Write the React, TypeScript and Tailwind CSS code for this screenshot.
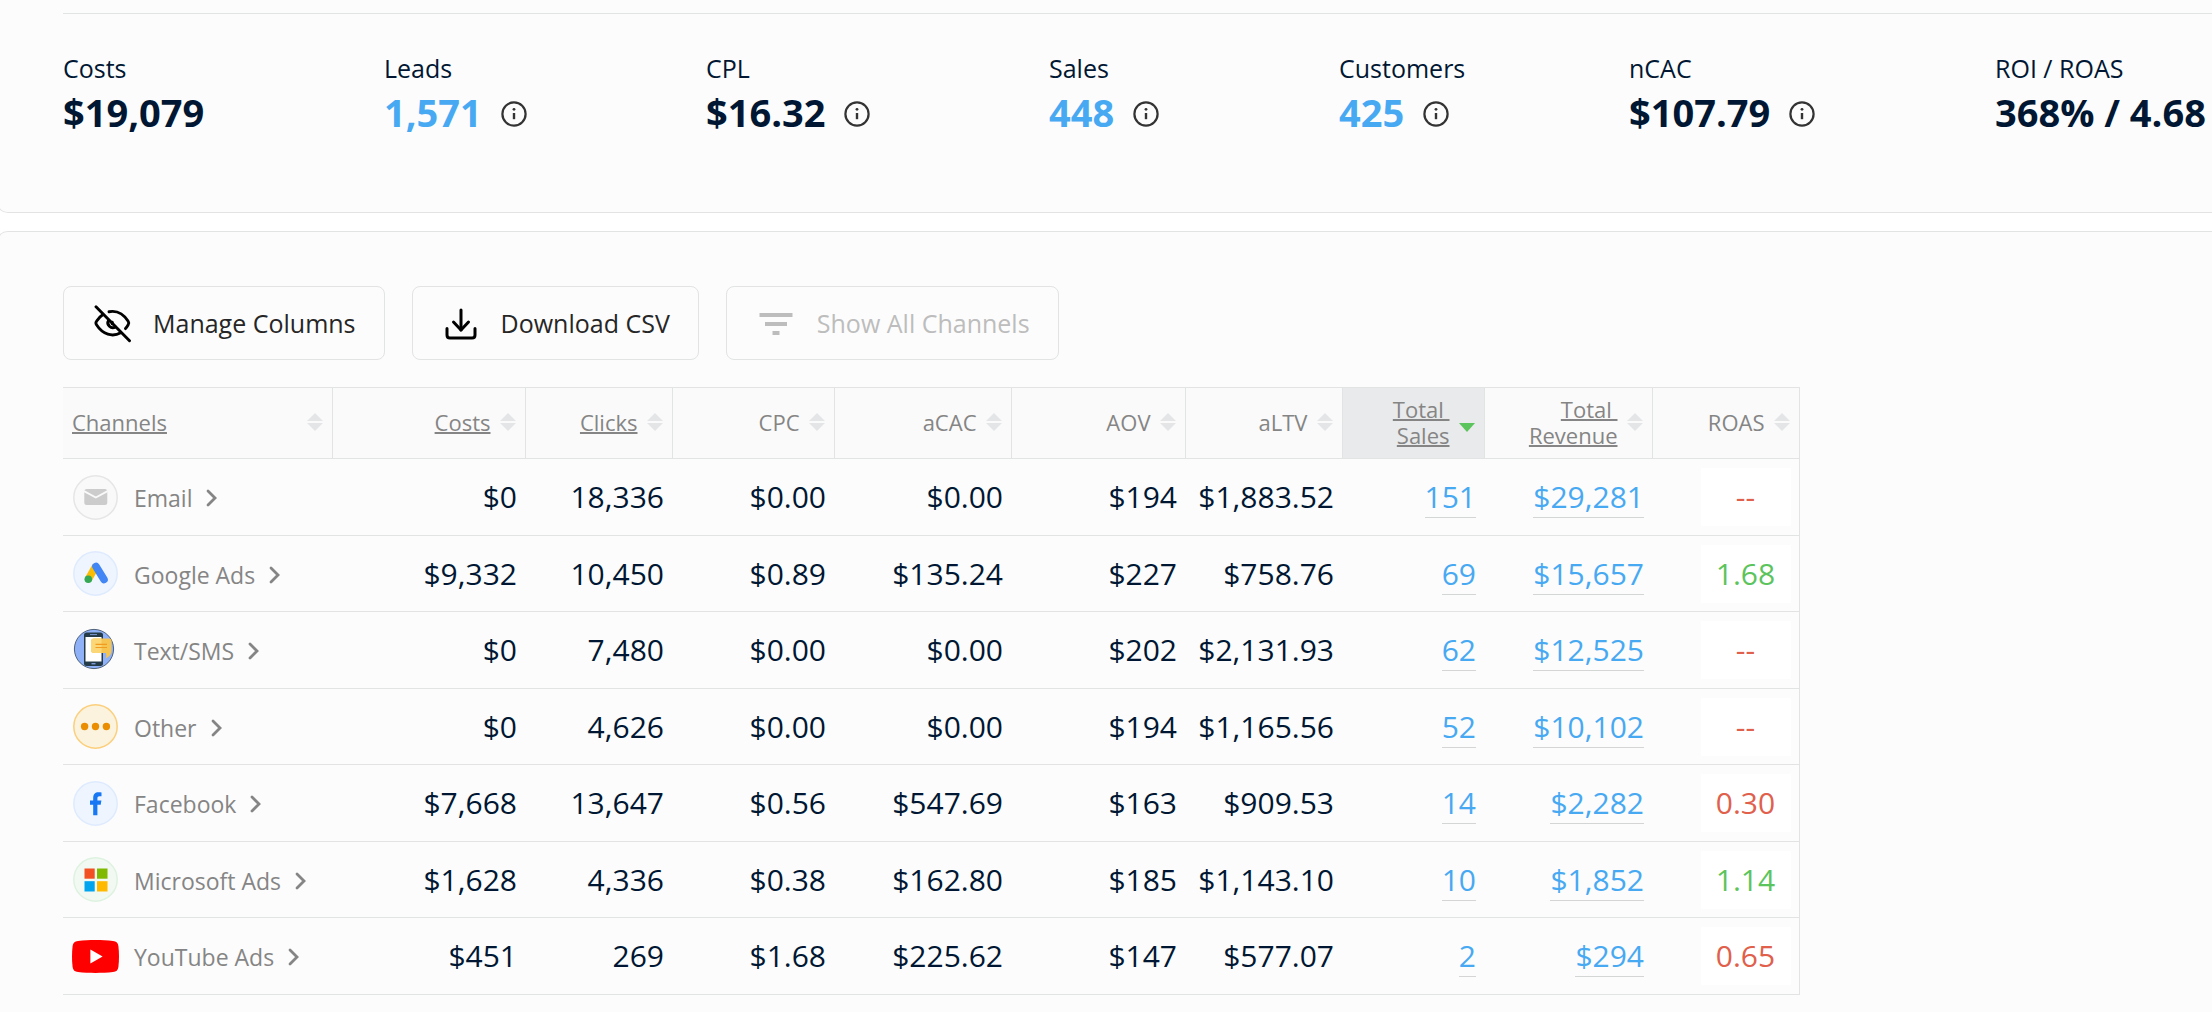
import React from "react";

type Kpi = {
  label: string;
  value: string;
  width: string;
  info?: boolean;
  link?: boolean;
};

type Channel = {
  name: string;
  icon: React.ReactNode;
  values: string[];
  sales: string;
  revenue: string;
  roas: string;
};

type Column = {
  label: string;
  width: string;
  underline?: boolean;
  sorted?: boolean;
};

const kpis: Kpi[] = [
  { label: "Costs", value: "$19,079", width: "w-[321px]" },
  { label: "Leads", value: "1,571", width: "w-[322px]", info: true, link: true },
  { label: "CPL", value: "$16.32", width: "w-[343px]", info: true },
  { label: "Sales", value: "448", width: "w-[290px]", info: true, link: true },
  { label: "Customers", value: "425", width: "w-[290px]", info: true, link: true },
  { label: "nCAC", value: "$107.79", width: "w-[366px]", info: true },
  { label: "ROI / ROAS", value: "368% / 4.68", width: "w-[220px]" },
];

const columns: Column[] = [
  { label: "Channels", width: "w-[269px]", underline: true },
  { label: "Costs", width: "w-[193px]", underline: true },
  { label: "Clicks", width: "w-[147px]", underline: true },
  { label: "CPC", width: "w-[162px]" },
  { label: "aCAC", width: "w-[177px]" },
  { label: "AOV", width: "w-[174px]" },
  { label: "aLTV", width: "w-[157px]" },
  { label: "Total\u00a0\nSales", width: "w-[142px]", underline: true, sorted: true },
  { label: "Total\u00a0\nRevenue", width: "w-[168px]", underline: true },
  { label: "ROAS", width: "w-[147px]" },
];

function EmailIcon() {
  return (
    <svg width="45" height="45" viewBox="0 0 45 45">
      <circle cx="22.5" cy="22.5" r="21.7" fill="#f9f9f9" stroke="#e6e6e6" strokeWidth="1.5" />
      <rect x="11.3" y="14" width="23" height="16" rx="2.5" fill="#cccccc" />
      <path d="M11 16.2l11.8 6.3 11.8-6.3" fill="none" stroke="#f9f9f9" strokeWidth="1.9" />
    </svg>
  );
}

function GoogleAdsIcon() {
  return (
    <svg width="45" height="45" viewBox="0 0 45 45">
      <circle cx="22.5" cy="22.5" r="21.7" fill="#eef5ff" stroke="#deebfe" strokeWidth="1.5" />
      <path d="M15.3 28.3L22.8 15.2" stroke="#fbbc04" strokeWidth="7.4" />
      <path d="M23 15.4L31 28.4" stroke="#4285f4" strokeWidth="7.6" strokeLinecap="round" />
      <circle cx="15.3" cy="28.3" r="3.8" fill="#34a853" />
    </svg>
  );
}

function SmsIcon() {
  return (
    <svg width="45" height="45" viewBox="0 0 45 45">
      <circle cx="21" cy="21" r="19.6" fill="#8fb1f8" stroke="#41536b" strokeWidth="0.9" />
      <rect x="11" y="4.5" width="19" height="33.5" rx="2.5" fill="#263b48" />
      <rect x="12.5" y="9" width="16" height="24.5" fill="#ffffff" />
      <path d="M17 6.6h7" stroke="#7d9bd8" strokeWidth="1" />
      <path d="M18.5 35.7h4" stroke="#7d9bd8" strokeWidth="1.4" />
      <path d="M21 10.5h15q2.5 0 2.5 2.5v10q0 5-6 7.5 1.5-2.5.5-5.500H21q-3 0-3-3v-8.500q0-3 3-3z" fill="#f6c451" />
      <path d="M21 10.5h7.5V25H21q-3 0-3-3v-8.500q0-3 3-3z" fill="#fbd777" />
      <path d="M22.5 16.4h11.5M22.5 19.5h11.5" stroke="#f29c1f" strokeWidth="1.2" />
    </svg>
  );
}

function OtherIcon() {
  return (
    <svg width="45" height="45" viewBox="0 0 45 45">
      <circle cx="22.5" cy="22.5" r="21.7" fill="#fbf3dd" stroke="#fbcf7c" strokeWidth="1.5" />
      <circle cx="11.6" cy="22.5" r="3.7" fill="#eb8d00" />
      <circle cx="22.5" cy="22.5" r="3.7" fill="#eb8d00" />
      <circle cx="33.4" cy="22.5" r="3.7" fill="#eb8d00" />
    </svg>
  );
}

function FacebookIcon() {
  return (
    <svg width="45" height="45" viewBox="0 0 45 45">
      <circle cx="22.5" cy="22.5" r="21.7" fill="#eef5ff" stroke="#deebfe" strokeWidth="1.5" />
      <path
        d="M20.2 34.2V23.8h-3.2v-4.2h3.2v-2.6c0-3.7 1.9-5.7 5.4-5.7 1.1 0 2.2.1 2.9.3v3.7h-1.9c-1.6 0-2.2.8-2.2 2.1v2.2h4l-.7 4.2h-3.3v10.4z"
        fill="#1877f2"
      />
    </svg>
  );
}

function MicrosoftIcon() {
  return (
    <svg width="45" height="45" viewBox="0 0 45 45">
      <circle cx="22.5" cy="22.5" r="21.7" fill="#f2f9f2" stroke="#def2e0" strokeWidth="1.5" />
      <rect x="11.5" y="11.5" width="10.2" height="10.2" fill="#f25022" />
      <rect x="24" y="11.5" width="10.5" height="10.2" fill="#7fba00" />
      <rect x="11.5" y="24.2" width="10.2" height="10.3" fill="#00a4ef" />
      <rect x="24" y="24.2" width="10.5" height="10.3" fill="#ffb900" />
    </svg>
  );
}

function YoutubeIcon() {
  return (
    <svg width="47" height="33" viewBox="0 0 47 33" className="-mx-px">
      <path
        d="M6 .9C17 -.3 30 -.3 41 .9c3.5.4 5 2 5.4 5 .8 7 .8 14.2 0 21.2-.4 3-1.9 4.6-5.4 5-11 1.2-24 1.2-35 0-3.5-.4-5-2-5.4-5-.8-7-.8-14.2 0-21.2C1 2.9 2.5 1.3 6 .9z"
        fill="#ff0000"
      />
      <path d="M18.4 9.5v14l12.2-7z" fill="#ffffff" />
    </svg>
  );
}

const channels: Channel[] = [
  { name: "Email", icon: <EmailIcon />, values: ["$0", "18,336", "$0.00", "$0.00", "$194", "$1,883.52"], sales: "151", revenue: "$29,281", roas: "--" },
  { name: "Google Ads", icon: <GoogleAdsIcon />, values: ["$9,332", "10,450", "$0.89", "$135.24", "$227", "$758.76"], sales: "69", revenue: "$15,657", roas: "1.68" },
  { name: "Text/SMS", icon: <SmsIcon />, values: ["$0", "7,480", "$0.00", "$0.00", "$202", "$2,131.93"], sales: "62", revenue: "$12,525", roas: "--" },
  { name: "Other", icon: <OtherIcon />, values: ["$0", "4,626", "$0.00", "$0.00", "$194", "$1,165.56"], sales: "52", revenue: "$10,102", roas: "--" },
  { name: "Facebook", icon: <FacebookIcon />, values: ["$7,668", "13,647", "$0.56", "$547.69", "$163", "$909.53"], sales: "14", revenue: "$2,282", roas: "0.30" },
  { name: "Microsoft Ads", icon: <MicrosoftIcon />, values: ["$1,628", "4,336", "$0.38", "$162.80", "$185", "$1,143.10"], sales: "10", revenue: "$1,852", roas: "1.14" },
  { name: "YouTube Ads", icon: <YoutubeIcon />, values: ["$451", "269", "$1.68", "$225.62", "$147", "$577.07"], sales: "2", revenue: "$294", roas: "0.65" },
];

function InfoIcon() {
  return (
    <svg width="26" height="26" viewBox="0 0 26 26" fill="none">
      <circle cx="13" cy="13" r="11.6" stroke="#333333" strokeWidth="2.2" />
      <path d="M13 12v6.2" stroke="#333333" strokeWidth="2.4" />
      <circle cx="13" cy="8.3" r="1.4" fill="#333333" />
    </svg>
  );
}

function EyeOffIcon() {
  return (
    <svg width="38" height="38" viewBox="0 0 38 38" fill="none" stroke="#000000" strokeWidth="2.9" strokeLinecap="round">
      <path d="M2 1.8l33.5 34" />
      <path d="M15 6.7c7.5-1.4 14.3 1.8 19.2 9.6.8 1.2.8 2.3 0 3.5-.8 1.4-1.6 2.6-2.7 3.8" />
      <path d="M9 9.5c-2.5 1.6-4.7 3.9-6.5 6.8-.8 1.2-.8 2.3 0 3.5 6.3 9.9 15.9 12.5 24.3 8" />
      <path d="M14.6 15.2c-2.6 4.6 2.4 9.4 6.9 6.7" />
      <path d="M18.2 17.3v1.6" />
    </svg>
  );
}

function DownloadIcon() {
  return (
    <svg width="32" height="32" viewBox="0 0 32 32" fill="none" stroke="#000000" strokeWidth="3" strokeLinecap="round" strokeLinejoin="round">
      <path d="M16 2v20" />
      <path d="M8.5 14l7.5 8 7.5-8" />
      <path d="M2 20.5v6.5c0 2 1 3 3 3h22c2 0 3-1 3-3v-6.5" />
    </svg>
  );
}

function FilterIcon() {
  return (
    <svg width="34" height="24" viewBox="0 0 34 24" fill="#bdbdbd">
      <rect x="0.5" y="1" width="33" height="4" />
      <rect x="6" y="10" width="22" height="4" />
      <rect x="13.5" y="19" width="7" height="4" />
    </svg>
  );
}

function SortIcon({ sorted }: { sorted?: boolean }) {
  if (sorted) {
    return (
      <svg width="16" height="20" viewBox="0 0 16 20" className="shrink-0">
        <path d="M0 11h16l-8 9z" fill="#5cc45c" />
      </svg>
    );
  }
  return (
    <svg width="16" height="18" viewBox="0 0 16 18" fill="#e4e5e7" className="shrink-0">
      <path d="M8 0l8 8H0z" />
      <path d="M0 10h16l-8 8z" />
    </svg>
  );
}

function ChevronIcon() {
  return (
    <svg width="12" height="18" viewBox="0 0 12 18" fill="none" stroke="#858585" strokeWidth="2.8" strokeLinecap="round">
      <path d="M2 2l7 7-7 7" />
    </svg>
  );
}

const roasColor = (roas: string) => {
  return Number(roas) >= 1 ? "text-[#5cc45c]" : "text-[#e0604c]";
};

const buttonClass =
  "flex h-[74px] items-center rounded-lg border border-[#e2e3e3] pt-0.5 pr-7 text-[25px]";

export default function App() {
  return (
    <div className="min-h-screen overflow-hidden bg-white font-['Open_Sans',sans-serif] text-[#001733]">
      <section className="-ml-1 rounded-bl-xl border-b border-l border-[#e2e3e3] bg-[#fcfcfc] pt-[13px] pl-[66px]">
        <dl className="flex h-[199px] border-t border-[#e2e3e3] pt-[37px]">
          {kpis.map((kpi) => (
            <div key={kpi.label} className={`${kpi.width} shrink-0`}>
              <dt className="text-[25px] leading-[34px]">{kpi.label}</dt>
              <dd className="flex items-center gap-[19px] text-[38px] leading-[54px] font-bold whitespace-nowrap">
                {kpi.link ? (
                  <a href="#" className="text-[#48a9f3]">
                    {kpi.value}
                  </a>
                ) : (
                  <span>{kpi.value}</span>
                )}
                {kpi.info && (
                  <button type="button" aria-label={`About ${kpi.label}`} className="pt-1">
                    <InfoIcon />
                  </button>
                )}
              </dd>
            </div>
          ))}
        </dl>
      </section>

      <section className="mt-[18px] -ml-1 min-h-[781px] rounded-tl-xl border-t border-l border-[#e2e3e3] bg-[#fcfcfc] pt-[54px] pl-[66px]">
        <div className="flex gap-[27px]">
          <button type="button" className={`${buttonClass} gap-[21px] pl-[30px] text-[#262626]`}>
            <EyeOffIcon />
            Manage Columns
          </button>
          <button type="button" className={`${buttonClass} gap-6 pl-8 text-[#262626]`}>
            <DownloadIcon />
            Download CSV
          </button>
          <button type="button" disabled className={`${buttonClass} gap-6 pl-8 text-[#bdbdbd]`}>
            <FilterIcon />
            Show All Channels
          </button>
        </div>

        <table className="mt-[27px] table-fixed border-collapse border-y border-r border-[#e2e3e3]">
          <thead>
            <tr className="h-[71px] border-b border-[#e2e3e3] bg-[#fafafa] text-[22px] leading-[26px] text-[#858585]">
              {columns.map((col, i) => (
                <th
                  key={col.label}
                  className={`${col.width} border-r border-[#e2e3e3] px-[9px] pb-0.5 font-normal ${col.sorted ? "bg-[#e9eaeb]" : ""}`}
                >
                  <button
                    type="button"
                    className={`flex w-full items-center gap-[9px] text-right ${i === 0 ? "justify-between" : "justify-end"}`}
                  >
                    <span className={`whitespace-pre-line ${col.underline ? "underline decoration-2" : ""}`}>
                      {col.label}
                    </span>
                    <SortIcon sorted={col.sorted} />
                  </button>
                </th>
              ))}
            </tr>
          </thead>
          <tbody>
            {channels.map((channel) => (
              <tr
                key={channel.name}
                className="h-[76px] border-b border-[#e2e3e3] text-right text-[30px] leading-[40px] odd:h-[77px]"
              >
                <td className="px-[10px]">
                  <a href="#" className="flex items-center gap-4 text-[23px] text-[#858585]">
                    {channel.icon}
                    <span className="flex items-center gap-[14px] pt-0.5">
                      {channel.name}
                      <ChevronIcon />
                    </span>
                  </a>
                </td>
                {channel.values.map((value, i) => (
                  <td key={i} className="px-2">
                    {value}
                  </td>
                ))}
                <td className="px-2">
                  <a href="#" className="border-b border-[#d4d5d5] text-[#48a9f3]">
                    {channel.sales}
                  </a>
                </td>
                <td className="px-2">
                  <a href="#" className="border-b border-[#d4d5d5] text-[#48a9f3]">
                    {channel.revenue}
                  </a>
                </td>
                <td className="px-2">
                  <div className={`ml-auto flex h-[58px] w-[90px] items-center justify-center bg-white ${roasColor(channel.roas)}`}>
                    {channel.roas}
                  </div>
                </td>
              </tr>
            ))}
          </tbody>
        </table>
      </section>
    </div>
  );
}
